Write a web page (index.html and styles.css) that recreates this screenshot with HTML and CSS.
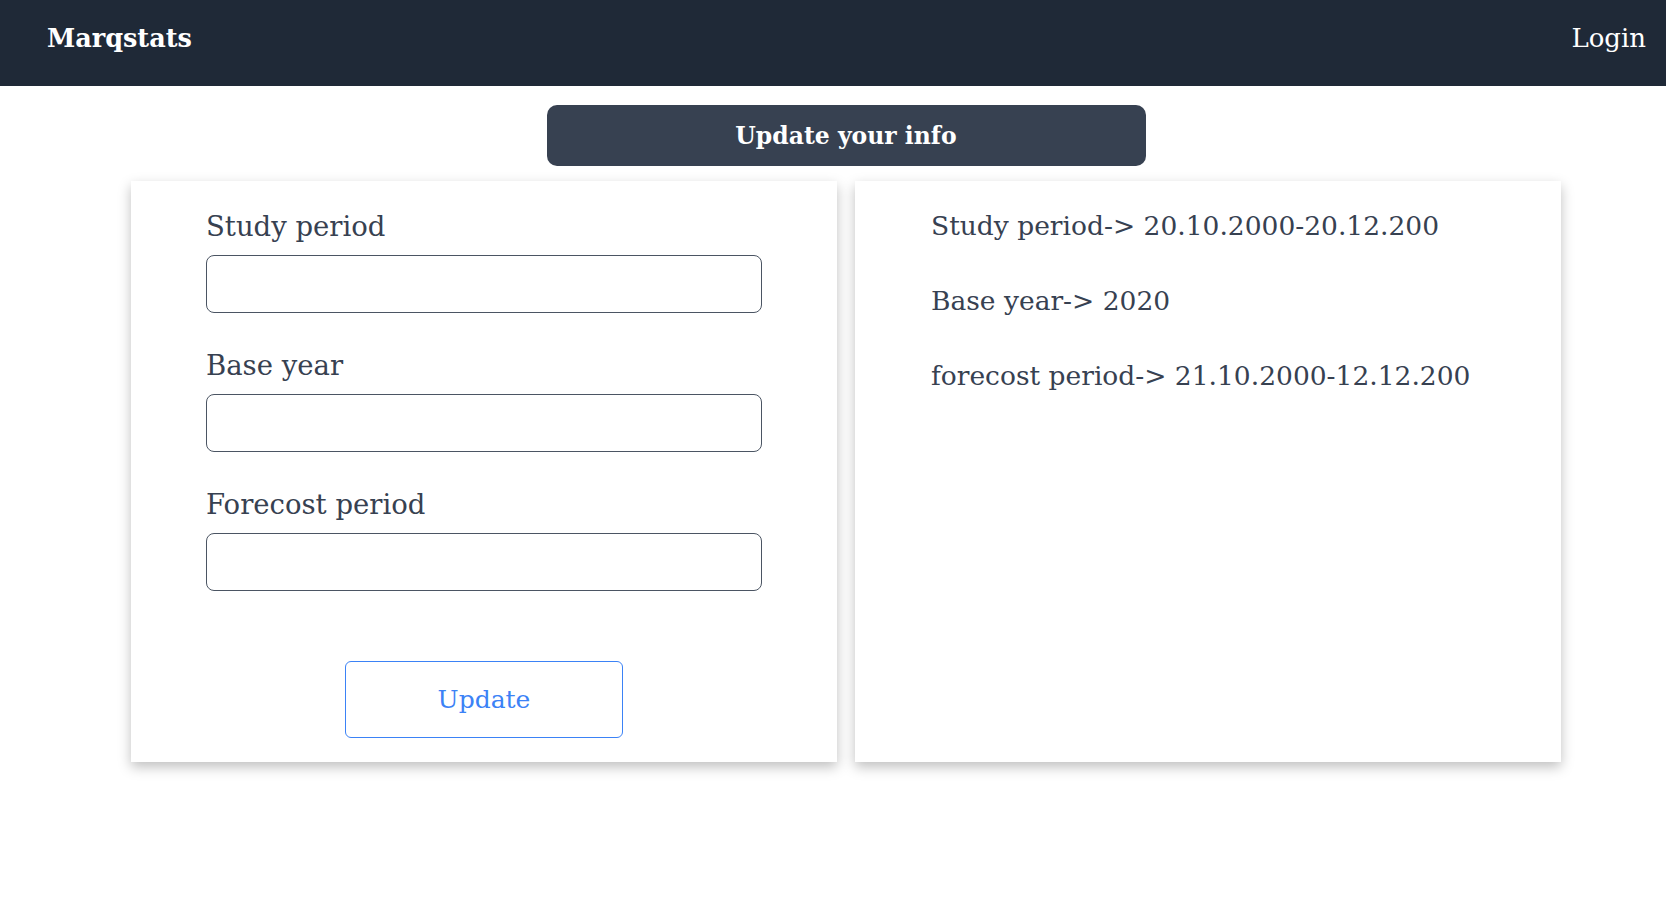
FILE: index.html
```html
<!DOCTYPE html>
<html lang="en">
<head>
<meta charset="utf-8">
<title>Marqstats</title>
<link rel="stylesheet" href="styles.css">
</head>
<body>
<nav class="navbar">
  <a class="brand" href="#">Marqstats</a>
  <a class="login" href="#">Login</a>
</nav>
<main class="container">
  <h1 class="title">Update your info</h1>
  <div class="cards">
    <form class="card form-card">
      <label class="field">
        <span class="label">Study period</span>
        <input class="input" type="text">
      </label>
      <label class="field">
        <span class="label">Base year</span>
        <input class="input" type="text">
      </label>
      <label class="field">
        <span class="label">Forecost period</span>
        <input class="input" type="text">
      </label>
      <div class="actions">
        <button class="btn" type="button">Update</button>
      </div>
    </form>
    <section class="card info-card">
      <p class="info">Study period-&gt; 20.10.2000-20.12.200</p>
      <p class="info">Base year-&gt; 2020</p>
      <p class="info">forecost period-&gt; 21.10.2000-12.12.200</p>
    </section>
  </div>
</main>
</body>
</html>
```
FILE: styles.css
```css
* { box-sizing: border-box; }
body {
  margin: 0;
  background: #ffffff;
  font-family: "DejaVu Serif", "Liberation Serif", serif;
  color: #374151;
}
.navbar {
  height: 86px;
  background: #1f2937;
  display: flex;
  align-items: center;
  justify-content: space-between;
  padding: 0 20px 0 47px;
}
.brand {
  color: #ffffff;
  text-decoration: none;
  font-weight: bold;
  font-size: 25.5px;
  margin-top: -10px;
}
.login {
  color: #ffffff;
  text-decoration: none;
  font-size: 26px;
  margin-top: -10px;
}
.container {
  width: 1430px;
  margin-left: 131px;
}
.title {
  width: 599px;
  height: 61px;
  margin: 19px auto 15px;
  background: #374151;
  border-radius: 10px;
  color: #ffffff;
  font-size: 23.5px;
  font-weight: bold;
  display: flex;
  align-items: center;
  justify-content: center;
}
.cards {
  display: grid;
  grid-template-columns: 1fr 1fr;
  gap: 18px;
  padding-bottom: 20px;
}
.card {
  height: 581px;
  background: #ffffff;
  box-shadow: 0 5px 12px rgba(0,0,0,0.25);
}
.form-card {
  padding: 28px 75px 0;
  display: flex;
  flex-direction: column;
}
.field {
  display: flex;
  flex-direction: column;
  margin-bottom: 35px;
}
.label {
  font-size: 27.5px;
  line-height: 34px;
  margin-bottom: 12px;
}
.input {
  height: 58px;
  border: 1px solid #4b5563;
  border-radius: 8px;
  font: inherit;
  padding: 0 12px;
}
.actions {
  display: flex;
  justify-content: center;
  margin-top: 35px;
}
.btn {
  width: 278px;
  height: 77px;
  background: #ffffff;
  border: 1px solid #3b82f6;
  border-radius: 6px;
  color: #3b82f6;
  font-family: inherit;
  font-size: 25px;
}
.info-card {
  padding: 28px 76px 0;
}
.info {
  margin: 0 0 41px;
  font-size: 26.5px;
  line-height: 34px;
}
```
